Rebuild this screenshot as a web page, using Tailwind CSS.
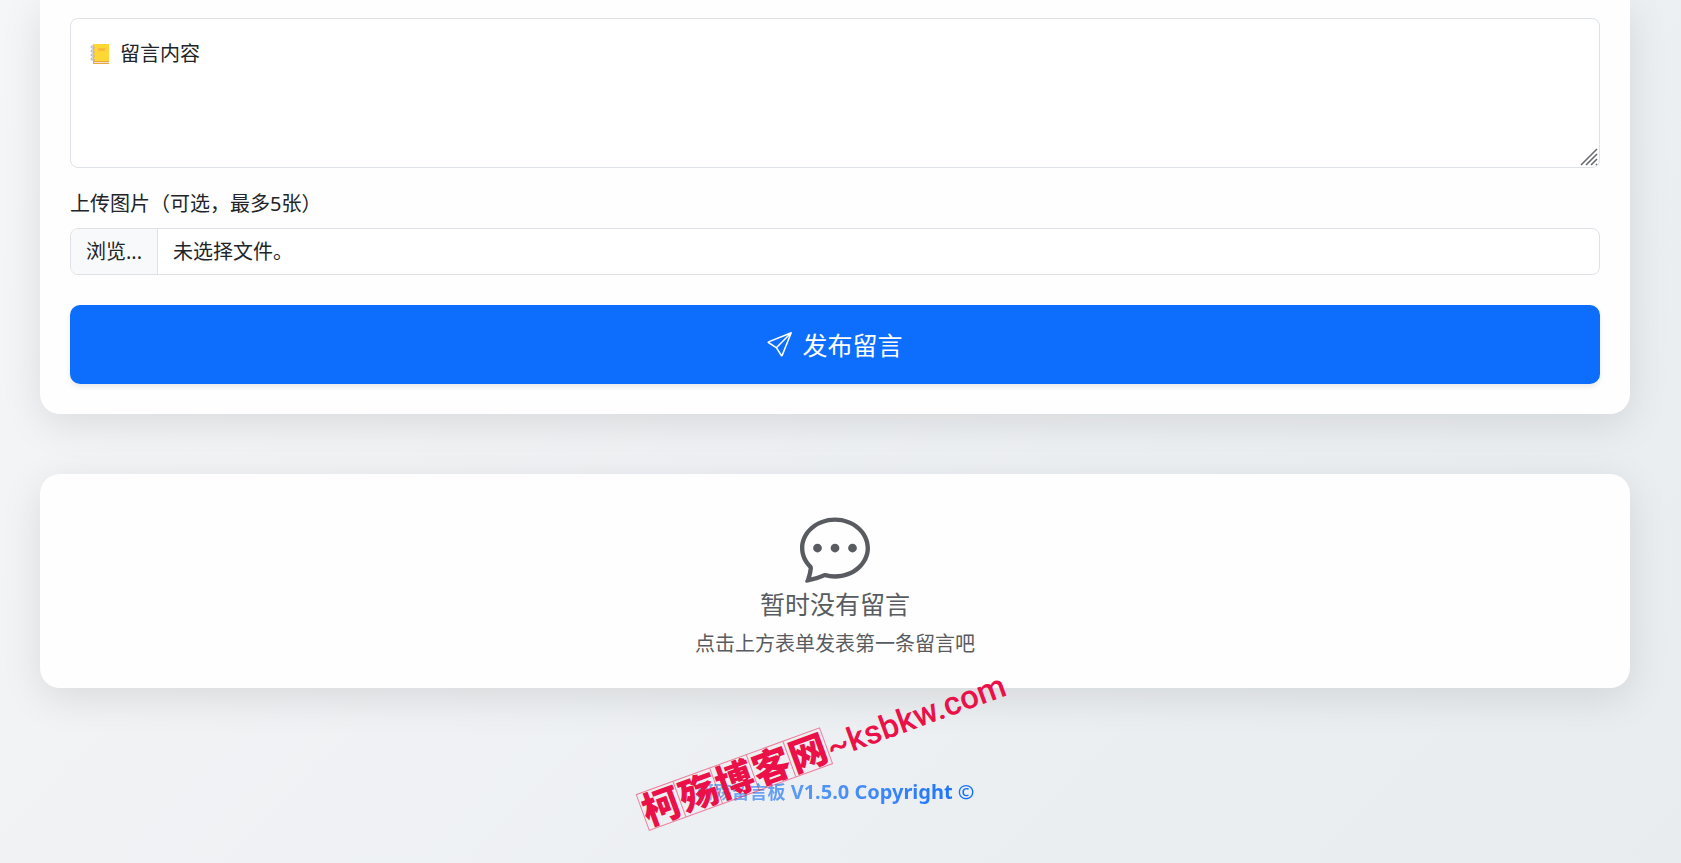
<!DOCTYPE html>
<html lang="zh-CN">
<head>
    <meta charset="UTF-8">
    <meta name="viewport" content="width=device-width, initial-scale=1.0">
    <title>柯殇留言板</title>
    <script src="https://cdn.jsdelivr.net/npm/@tailwindcss/browser@4"></script>
</head>
<body class="min-h-screen overflow-x-hidden bg-linear-135 from-[#f5f6f8] to-[#e8ecef] pl-10 pr-[51px] font-['Noto_Sans','Noto_Sans_CJK_SC',sans-serif] text-xl leading-[30px] text-[#212529]">

    <!-- Message form -->
    <form class="rounded-b-[20px] bg-[#fefefe] px-[30px] pt-[18px] pb-[30px] shadow-[0_10px_40px_rgba(0,0,0,0.1)]">
        <div class="relative">
            <textarea id="content" class="block h-[150px] w-full resize-none rounded-lg border border-[#dee2e6] bg-white px-5 pt-[50px] pb-3 focus:outline-none focus:ring-2 focus:ring-blue-500"></textarea>
            <label for="content" class="absolute top-[21px] left-5 flex items-center gap-2.5">
                <svg class="size-5" viewBox="0 0 20 20" fill="none">
                    <path d="M3 0h16v18H3z" fill="#fdd835"/>
                    <path d="M3 17h16v3H3z" fill="#e8a93d"/>
                    <path d="M4 18h15v1H4z" fill="#f3dcd6"/>
                    <path d="M8 4h7v3H8z" fill="#fbb93b"/>
                    <path d="M4 2H2a1 1 0 0 0 0 2h3M4 6H2a1 1 0 0 0 0 2h3M4 10H2a1 1 0 0 0 0 2h3M4 14H2a1 1 0 0 0 0 2h3" stroke="#a9a4b8"/>
                </svg>
                留言内容
            </label>
            <svg class="pointer-events-none absolute right-0.5 bottom-0.5 size-[18px]" viewBox="0 0 18 18" stroke="#6b6b70" stroke-width="1.6">
                <path d="M1 17 17 1M6 17 17 6M11 17l6-6M16 17l1-1"/>
            </svg>
        </div>

        <label for="images" class="mt-[21px] block">上传图片（可选，最多5张）</label>
        <input type="file" id="images" accept="image/*" multiple class="sr-only">
        <label for="images" class="mt-[9px] flex h-[47px] items-stretch overflow-hidden rounded-lg border border-[#dee2e6] bg-white">
            <span class="flex items-center border-r border-[#dee2e6] bg-[#f8f9fa] px-[15px]">浏览...</span>
            <span class="flex items-center px-[15px]">未选择文件。</span>
        </label>

        <button type="submit" class="mt-[30px] flex h-[79px] w-full items-center justify-center gap-2.5 rounded-[10px] bg-[#0d6efd] text-[25px] text-white shadow-[0_3px_5px_rgba(0,0,0,0.08)] hover:bg-[#0b5ed7]">
            <svg class="size-[25px]" viewBox="0 0 16 16" fill="currentColor">
                <path d="M15.854.146a.5.5 0 0 1 .11.54l-5.819 14.547a.75.75 0 0 1-1.329.124l-3.178-4.995L.643 7.184a.75.75 0 0 1 .124-1.33L15.314.037a.5.5 0 0 1 .54.11ZM6.636 10.07l2.761 4.338L14.13 2.576zm6.787-8.201L1.591 6.602l4.339 2.76z"/>
            </svg>
            发布留言
        </button>
    </form>

    <!-- Empty state -->
    <section class="mt-[60px] flex flex-col items-center rounded-[20px] bg-[#fefefe] px-[30px] pt-[39px] pb-[29px] text-center text-[#585c60] shadow-[0_10px_40px_rgba(0,0,0,0.1)]">
        <svg class="size-[70px]" viewBox="0 0 16 16" fill="currentColor">
            <path d="M5 8a1 1 0 1 1-2 0 1 1 0 0 1 2 0m4 0a1 1 0 1 1-2 0 1 1 0 0 1 2 0m3 1a1 1 0 1 0 0-2 1 1 0 0 0 0 2"/>
            <path d="m2.165 15.803.02-.004c1.83-.363 2.948-.842 3.468-1.105A9 9 0 0 0 8 15c4.418 0 8-3.134 8-7s-3.582-7-8-7-8 3.134-8 7c0 1.76.743 3.37 1.97 4.6a10.4 10.4 0 0 1-.524 2.318l-.003.011a11 11 0 0 1-.244.637c-.079.186.074.394.273.362a22 22 0 0 0 .693-.125m.8-3.108a1 1 0 0 0-.287-.801C1.618 10.83 1 9.468 1 8c0-3.192 3.004-6 7-6s7 2.808 7 6-3.004 6-7 6a8 8 0 0 1-2.088-.272 1 1 0 0 0-.711.074c-.387.196-1.24.57-2.634.893a11 11 0 0 0 .398-2"/>
        </svg>
        <h2 class="mt-1.5 text-[25px] leading-[30px]">暂时没有留言</h2>
        <p class="mt-2.5">点击上方表单发表第一条留言吧</p>
    </section>

    <footer class="relative flex justify-center pt-[89px] pb-[55px]">
        <a href="#" class="bg-linear-to-r from-[#7eb0ee] to-[#0d6efd] bg-clip-text leading-[30px] font-bold text-transparent"><span class="text-lg leading-[30px]">柯殇留言板</span> V1.5.0 Copyright ©</a>

        <!-- Site stamp -->
        <div class="pointer-events-none absolute bottom-[31px] left-1/2 -ml-[186px] flex origin-bottom-left -rotate-20 items-end text-[#ec1049]">
            <div class="flex divide-x divide-[#ec1049]/50 border border-[#ec1049]/50 text-[38px] leading-[37px] font-black">
                <span>柯</span><span>殇</span><span>博</span><span>客</span><span>网</span>
            </div>
            <span class="font-[Roboto,sans-serif] text-[33px] leading-[33px] font-medium">~ksbkw.com</span>
        </div>
    </footer>
</body>
</html>
